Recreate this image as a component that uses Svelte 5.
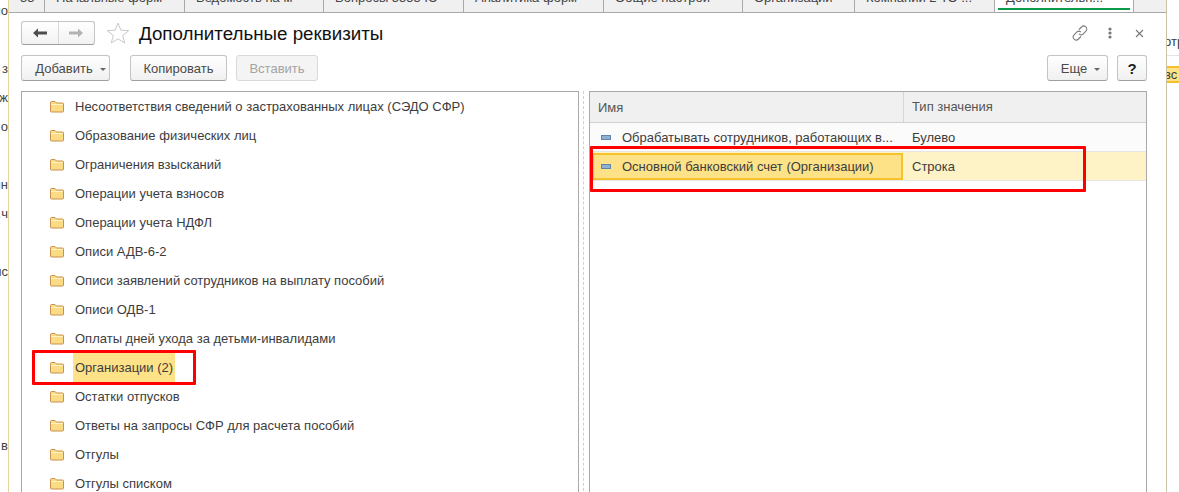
<script lang="ts">
  const tabs = ['33', 'Начальные форм', 'Ведомость на м', 'Вопросы 5555 Ю', 'Аналитика форм', 'Общие настрой', 'Организации', 'Компании 2 ТО ...', 'Дополнительн...'];
  const tabWidths = [36, 140, 139, 140, 140, 139, 112, 140, 139];

  const folders = [
    'Несоответствия сведений о застрахованных лицах (СЭДО СФР)',
    'Образование физических лиц',
    'Ограничения взысканий',
    'Операции учета взносов',
    'Операции учета НДФЛ',
    'Описи АДВ-6-2',
    'Описи заявлений сотрудников на выплату пособий',
    'Описи ОДВ-1',
    'Оплаты дней ухода за детьми-инвалидами',
    'Организации (2)',
    'Остатки отпусков',
    'Ответы на запросы СФР для расчета пособий',
    'Отгулы',
    'Отгулы списком'
  ];

  const behind = ['но', '', 'з', 'ж', 'о', '', 'ин', 'г.ч', '', 'ис', '', '', '', '', '', 'в'];
</script>

<div class="screen">
  <div class="strip-left">
    {#each behind as t}
      <div class="behind-row">{t}</div>
    {/each}
  </div>

  <div class="center">
    <div class="tabs">
      {#each tabs as t, i}
        <div class="tab" class:active={i === tabs.length - 1} style="width: {tabWidths[i]}px"><span>{t}</span></div>
      {/each}
    </div>

    <div class="window">
      <div class="titlebar">
        <div class="nav">
          <button class="nav-btn" aria-label="Назад">
            <svg width="14" height="10" viewBox="0 0 14 10"><path d="M0 5 5 .5V3.5H14V6.5H5V9.5Z" fill="#4d4d4d" /></svg>
          </button>
          <button class="nav-btn" aria-label="Вперед">
            <svg width="14" height="10" viewBox="0 0 14 10"><path d="M14 5 9 .5V3.5H0V6.5H9V9.5Z" fill="#b3b3b3" /></svg>
          </button>
        </div>
        <svg class="star" width="24" height="22" viewBox="0 0 24 22"><path d="M12 1 14.9 8.2 22.8 8.6 16.7 13.5 18.8 21 12 16.8 5.2 21 7.3 13.5 1.2 8.6 9.1 8.2Z" fill="none" stroke="#c9c9c9" /></svg>
        <h1>Дополнительные реквизиты</h1>
        <div class="win-icons">
          <svg width="16" height="16" viewBox="0 0 16 16" fill="none" stroke="#7a7a7a" stroke-width="1.1"><path d="M7 4.5 9.5 2a3 3 0 0 1 4.4 4.2L11.3 8.8a3 3 0 0 1-4.2 0" /><path d="M9 11.5 6.5 14a3 3 0 0 1-4.4-4.2L4.7 7.2a3 3 0 0 1 4.2 0" /></svg>
          <svg class="dots" width="4" height="12" viewBox="0 0 4 12" fill="#777"><circle cx="2" cy="2" r="1.6" /><circle cx="2" cy="6" r="1.6" /><circle cx="2" cy="10" r="1.6" /></svg>
          <svg class="close" width="9" height="9" viewBox="0 0 9 9" stroke="#777" stroke-width="1.1"><path d="M1 1 8 8M8 1 1 8" /></svg>
        </div>
      </div>

      <div class="toolbar">
        <button class="btn add">Добавить<i class="caret"></i></button>
        <button class="btn copy">Копировать</button>
        <button class="btn paste" disabled>Вставить</button>
        <button class="btn more">Еще<i class="caret"></i></button>
        <button class="btn help">?</button>
      </div>

      <div class="panes">
        <div class="tree">
          {#each folders as name}
            <div class="tree-row">
              <svg width="14" height="13" viewBox="0 0 14 13"><path d="M.5 11V2.5Q.5 1.5 1.5 1.5H5L6.5 3H12.5Q13.5 3 13.5 4V11Q13.5 12 12.5 12H1.5Q.5 12 .5 11Z" fill="#fbdc85" stroke="#c9914f" /><path d="M1 4.5H13" stroke="#fff3c4" /></svg>
              <span class:current={name === 'Организации (2)'}>{name}</span>
            </div>
          {/each}
        </div>

        <div class="splitter"></div>

        <div class="table">
          <div class="head">
            <div class="col-name">Имя</div>
            <div class="col-type">Тип значения</div>
          </div>
          <div class="row">
            <div class="col-name"><i class="mark"></i>Обрабатывать сотрудников, работающих в...</div>
            <div class="col-type">Булево</div>
          </div>
          <div class="row selected">
            <div class="col-name"><i class="mark"></i>Основной банковский счет (Организации)</div>
            <div class="col-type">Строка</div>
          </div>
        </div>
      </div>
    </div>
  </div>

  <div class="strip-right">
    <div class="behind-text">отр</div>
    <div class="behind-sel">вс</div>
  </div>

  <div class="callout callout-tree"></div>
  <div class="callout callout-table"></div>
</div>

<style>
  :global(body) { margin: 0; background: #fff; }
  .screen {
    position: relative;
    display: flex;
    width: 1179px;
    height: 492px;
    overflow: hidden;
    font-family: "Liberation Sans", Arial, sans-serif;
    font-size: 13px;
    color: #3d3d3d;
  }

  .strip-left {
    width: 8px;
    flex: none;
    padding-top: 4px;
    overflow: hidden;
    direction: rtl;
  }
  .behind-row {
    height: 29px;
    line-height: 14px;
    white-space: nowrap;
    color: #444;
  }

  .center {
    flex: 1;
    min-width: 0;
    display: flex;
    flex-direction: column;
    border-left: 1px solid #e3d59c;
  }

  .tabs {
    display: flex;
    height: 12px;
    flex: none;
    background: #f0f0f0;
    border-bottom: 1px solid #a9a9a9;
  }
  .tab {
    position: relative;
    box-sizing: border-box;
    display: flex;
    align-items: flex-end;
    padding: 0 0 7px 11px;
    overflow: hidden;
    border-right: 1px solid #a9a9a9;
    white-space: nowrap;
    line-height: 15px;
    color: #444;
  }
  .tab.active { background: #fff; }
  .tab.active::after {
    content: '';
    position: absolute;
    left: 3px;
    right: 3px;
    bottom: 2px;
    height: 2px;
    background: #0a9a4a;
  }

  .window { flex: 1; min-height: 0; padding: 0 19px 0 12px; }

  .titlebar { display: flex; align-items: center; height: 32px; margin-top: 4px; margin-bottom: 6px; }
  .nav {
    display: flex;
    box-sizing: border-box;
    width: 74px;
    height: 24px;
    border: 1px solid #c4c4c4;
    border-bottom-color: #9e9e9e;
    border-radius: 3px;
    background: linear-gradient(#fff, #f2f2f2);
  }
  .nav-btn {
    flex: 1;
    display: flex;
    align-items: center;
    justify-content: center;
    padding: 0;
    border: 0;
    background: none;
  }
  .nav-btn + .nav-btn { border-left: 1px solid #d8d8d8; }
  .star { margin-left: 11px; }
  h1 { margin: 2px 0 0 9px; font-size: 18.75px; font-weight: 400; color: #111; }
  .win-icons { margin-left: auto; display: flex; align-items: center; padding-right: 3px; }
  .dots { margin-left: 20px; }
  .close { margin-left: 23px; }

  .toolbar { display: flex; height: 26px; }
  .btn {
    box-sizing: border-box;
    height: 26px;
    padding: 0;
    border: 1px solid #c4c4c4;
    border-bottom-color: #a0a0a0;
    border-radius: 3px;
    background: linear-gradient(#fff, #f0f0f0);
    font: inherit;
    font-size: 13px;
    color: #4a4a4a;
    white-space: nowrap;
  }
  .add { width: 89px; padding-left: 10px; }
  .copy { width: 97px; margin-left: 20px; }
  .paste { width: 82px; margin-left: 9px; border-color: #d9d9d9; background: #f4f4f4; color: #a3a3a3; }
  .more { width: 61px; margin-left: auto; padding-left: 6px; }
  .help { width: 30px; margin-left: 9px; font-size: 15px; font-weight: 700; color: #222; }
  .caret {
    display: inline-block;
    margin-left: 7px;
    vertical-align: 2px;
    border-top: 3px solid #666;
    border-left: 3px solid transparent;
    border-right: 3px solid transparent;
  }

  .panes { display: flex; align-items: stretch; height: 420px; margin-top: 10px; }
  .tree {
    box-sizing: border-box;
    width: 558px;
    flex: none;
    border: 1px solid #a9a9a9;
  }
  .tree-row {
    display: flex;
    align-items: center;
    height: 29px;
    padding-left: 28px;
  }
  .tree-row span { margin-left: 9px; padding: 0 2px; line-height: 29px; }
  .tree-row span.current { background: #fde288; }
  .splitter { width: 0; margin: 0 5px 0 4px; border-left: 1px dashed #d0d0d0; }

  .table {
    box-sizing: border-box;
    flex: 1;
    min-width: 0;
    border: 1px solid #a9a9a9;
  }
  .head, .row { display: grid; grid-template-columns: 313px 1fr; }
  .head {
    height: 30px;
    align-items: center;
    background: #f0f0f0;
    border-bottom: 1px solid #d0d0d0;
    color: #555;
  }
  .head .col-name { padding-left: 8px; }
  .head .col-type { padding-left: 8px; line-height: 30px; border-left: 1px solid #d6d6d6; }
  .row { height: 28px; align-items: center; border-bottom: 1px solid #e6e6e6; background: #fbfbfb; }
  .row .col-name { display: flex; align-items: center; padding-left: 11px; }
  .row .col-type { padding-left: 9px; }
  .mark {
    width: 10px;
    height: 5px;
    margin-right: 11px;
    box-sizing: border-box;
    background: #8fb0d0;
    border: 1px solid #5d86ad;
  }
  .row.selected { background: #fdf3c6; }
  .row.selected .col-name {
    box-sizing: border-box;
    height: 27px;
    margin-left: 2px;
    padding-left: 7px;
    background: #fde288;
    border: 2px solid #f5c32c;
  }

  .strip-right {
    box-sizing: border-box;
    width: 13px;
    flex: none;
    overflow: hidden;
    border-left: 1px solid #c9c4a6;
    padding-top: 35px;
    white-space: nowrap;
  }
  .behind-text { height: 20px; margin-left: -3px; line-height: 14px; border-bottom: 1px solid #e4e4e4; }
  .behind-sel {
    box-sizing: border-box;
    margin: 10px 0 0 -3px;
    height: 17px;
    line-height: 13px;
    background: #fde288;
    border-top: 2px solid #f3bf2c;
    border-bottom: 2px solid #f3bf2c;
  }

  .callout { position: absolute; box-sizing: border-box; border: 3px solid #f00; border-radius: 1px; }
  .callout-tree { left: 32px; top: 350px; width: 164px; height: 35px; }
  .callout-table { left: 590px; top: 146px; width: 496px; height: 46px; }
</style>
